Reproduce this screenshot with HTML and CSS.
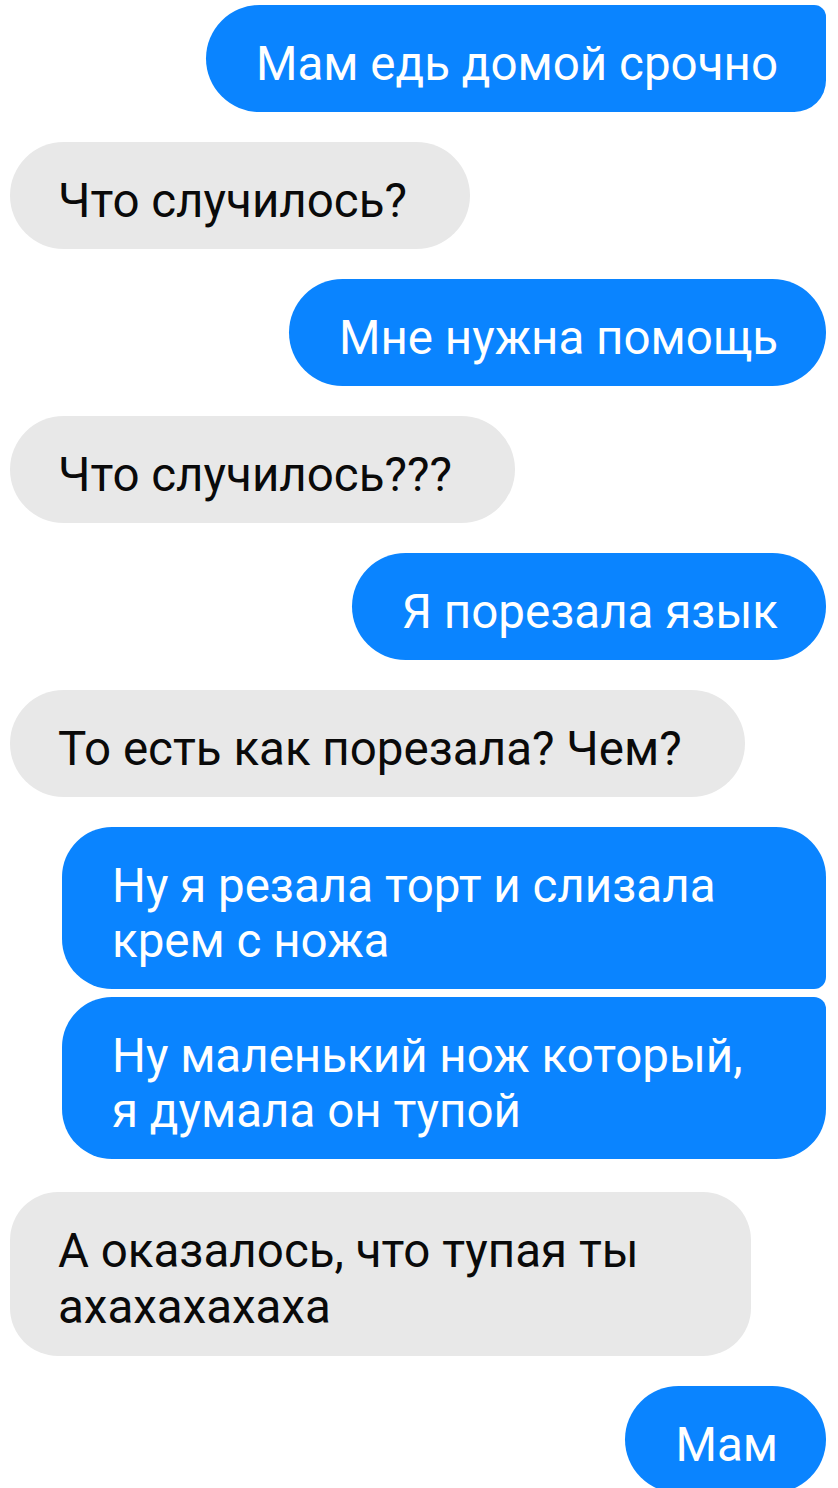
FILE: index.html
```html
<!DOCTYPE html>
<html lang="ru">
<head>
<meta charset="utf-8">
<link rel="stylesheet" href="styles.css">
</head>
<body>
<div class="chat">
  <div class="msg out first">Мам едь домой срочно</div>
  <div class="msg in">Что случилось?</div>
  <div class="msg out">Мне нужна помощь</div>
  <div class="msg in">Что случилось???</div>
  <div class="msg out">Я порезала язык</div>
  <div class="msg in">То есть как порезала? Чем?</div>
  <div class="group">
    <div class="msg out top">Ну я резала торт и слизала крем с ножа</div>
    <div class="msg out bottom">Ну маленький нож который, я думала он тупой</div>
  </div>
  <div class="msg in wide">А оказалось, что тупая ты ахахахахаха</div>
  <div class="msg out">Мам</div>
</div>
</body>
</html>
```

FILE: styles.css
```css
html, body {
  margin: 0;
  padding: 0;
  background: #ffffff;
  overflow: hidden;
}

.chat {
  display: flex;
  flex-direction: column;
  gap: 30.5px;
  padding: 5px 12px 0 10px;
  font-family: Roboto, "Noto Sans", sans-serif;
}

.group {
  display: flex;
  flex-direction: column;
  align-items: flex-end;
  gap: 8px;
}

.msg {
  box-sizing: border-box;
  font-size: 47.5px;
  line-height: 55.5px;
  padding: 31.5px 48px 19.5px 50px;
  border-radius: 54px;
  width: fit-content;
}

.out {
  align-self: flex-end;
  background: #0a84ff;
  color: #ffffff;
  max-width: 764px;
}

.group .msg {
  padding-right: 64px;
}

.in {
  align-self: flex-start;
  background: #e8e8e8;
  color: #0a0a0a;
  padding-left: 48px;
  padding-right: 63px;
  max-width: 741px;
}

.first {
  border-top-right-radius: 12px;
  border-bottom-right-radius: 32px;
}

.top {
  border-radius: 50px 50px 12px 50px;
}

.bottom {
  border-radius: 50px 12px 50px 50px;
}

.wide {
  margin-top: 2px;
  padding-top: 32.5px;
  padding-bottom: 20.5px;
  border-radius: 48px;
}
```
